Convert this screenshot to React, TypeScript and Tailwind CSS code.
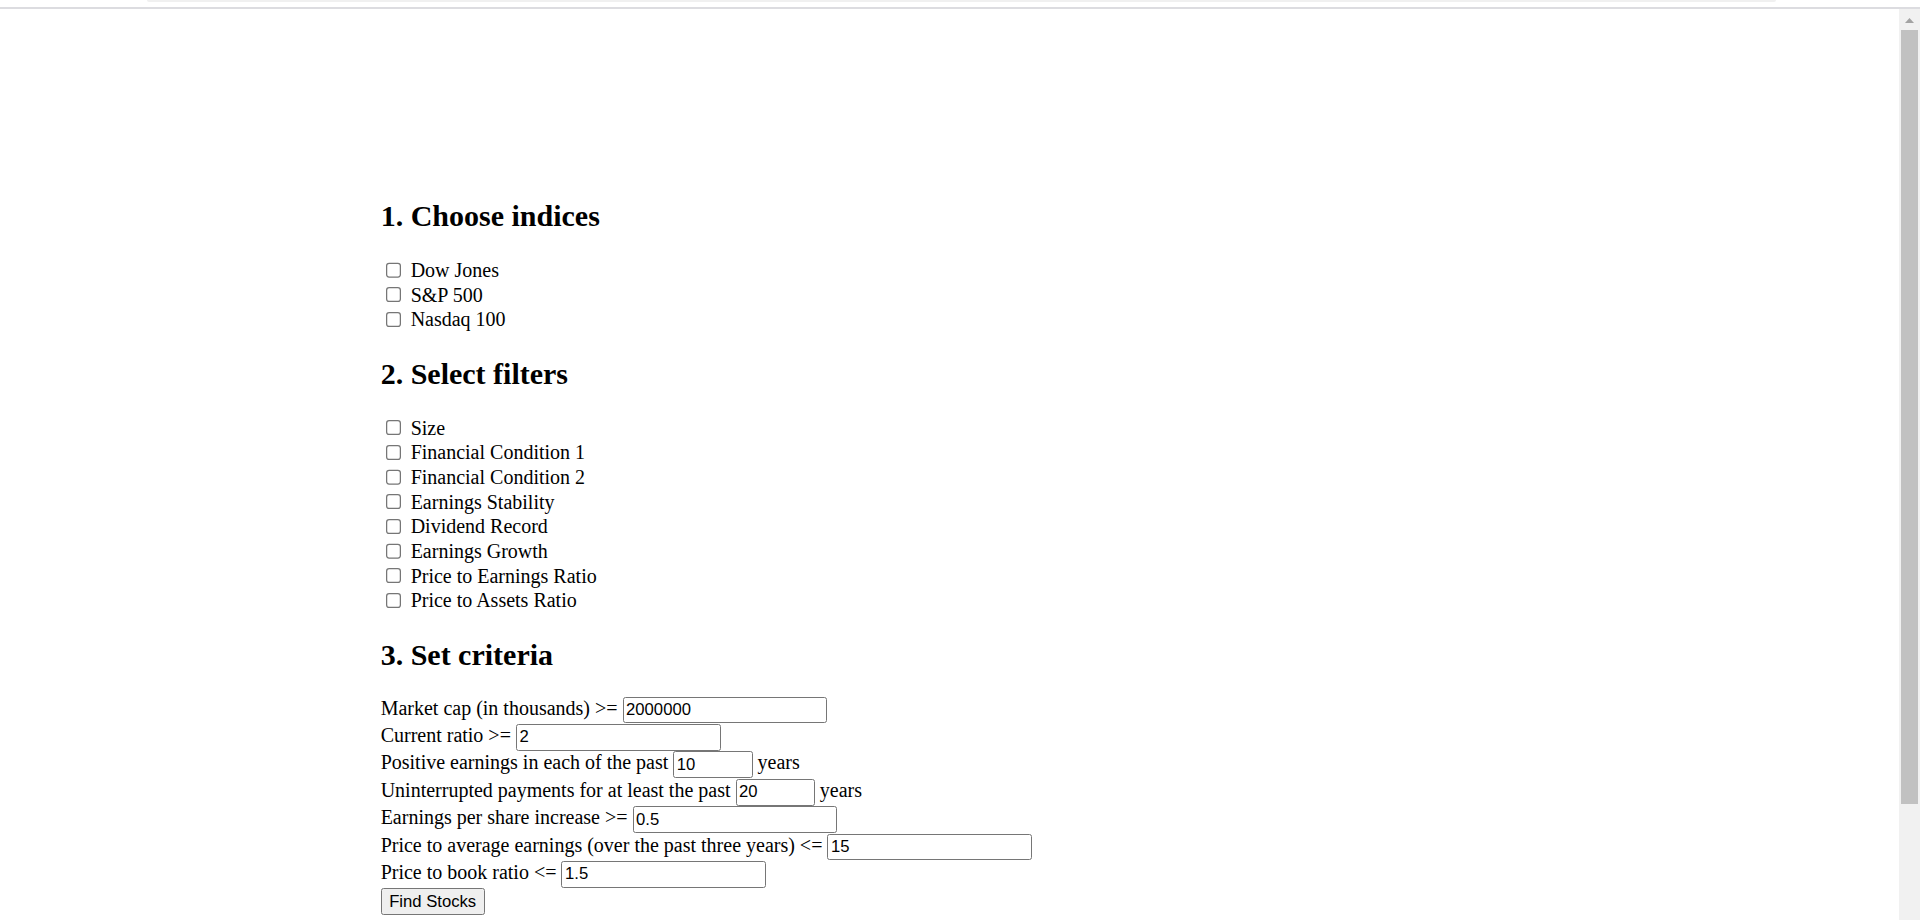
import React from "react";

const indices = ["Dow Jones", "S&P 500", "Nasdaq 100"];
const filters = [
  "Size",
  "Financial Condition 1",
  "Financial Condition 2",
  "Earnings Stability",
  "Dividend Record",
  "Earnings Growth",
  "Price to Earnings Ratio",
  "Price to Assets Ratio",
];

function CheckRow({ label }: { label: string }) {
  return (
    <div className="flex items-center h-[19.7px]">
      <input type="checkbox" className="ml-[4px] mr-[3px] w-[13px] h-[13px] shrink-0" />
      <label className="ml-[4px] leading-[normal] whitespace-nowrap">{label}</label>
    </div>
  );
}

function TextInput({ value, small }: { value: string; small?: boolean }) {
  return (
    <input
      type="text"
      defaultValue={value}
      className={
        (small ? "w-[63.4px] " : "w-[163.8px] ") +
        "h-[21.33px] border border-[#767676] rounded-[2px] px-[2px] py-[2px] bg-white text-black font-['Liberation_Sans',Arial,sans-serif] text-[13.333px] leading-[normal] align-baseline"
      }
    />
  );
}

function Row({ children }: { children: React.ReactNode }) {
  return <div className="h-[21.9px] leading-[normal] whitespace-nowrap">{children}</div>;
}

export default function App() {
  return (
    <div className="w-[1920px] h-[920px] overflow-hidden bg-white flex flex-col">
      <div className="h-[7px] shrink-0 flex">
        <div className="ml-[147px] w-[1629px] h-[2px] bg-[#f0f0f0] rounded-b-[2px]" />
      </div>
      <div className="h-[2px] shrink-0 bg-[#dcdce0]" />
      <div className="flex flex-1 min-h-0">
        <div className="flex-1 min-w-0 overflow-hidden">
          <div className="[zoom:1.25] pl-[304.5px] pt-[132.4px] font-['Liberation_Serif','Times_New_Roman',serif] text-[16px] text-black leading-[normal]">
            <h2 className="text-[24px] font-bold leading-[normal] my-[19.92px]">1. Choose indices</h2>
            {indices.map((l) => (
              <CheckRow key={l} label={l} />
            ))}
            <h2 className="text-[24px] font-bold leading-[normal] my-[19.92px]">2. Select filters</h2>
            {filters.map((l) => (
              <CheckRow key={l} label={l} />
            ))}
            <h2 className="text-[24px] font-bold leading-[normal] my-[19.92px]">3. Set criteria</h2>
            <Row>
              Market cap (in thousands) &gt;= <TextInput value="2000000" />
            </Row>
            <Row>
              Current ratio &gt;= <TextInput value="2" />
            </Row>
            <Row>
              Positive earnings in each of the past <TextInput value="10" small /> years
            </Row>
            <Row>
              Uninterrupted payments for at least the past <TextInput value="20" small /> years
            </Row>
            <Row>
              Earnings per share increase &gt;= <TextInput value="0.5" />
            </Row>
            <Row>
              Price to average earnings (over the past three years) &lt;= <TextInput value="15" />
            </Row>
            <Row>
              Price to book ratio &lt;= <TextInput value="1.5" />
            </Row>
            <div>
              <button
                type="button"
                className="h-[21.33px] px-[6px] py-[2px] border border-[#767676] rounded-[2px] bg-[#efefef] text-black font-['Liberation_Sans',Arial,sans-serif] text-[13.333px] leading-[normal]"
              >
                Find Stocks
              </button>
            </div>
          </div>
        </div>
        <div className="w-[21px] shrink-0 bg-[#f1f1f1] flex flex-col items-center">
          <svg width="9" height="5" viewBox="0 0 9 5" className="mt-[9px] shrink-0">
            <polygon points="4.5,0 9,5 0,5" fill="#a3a3a3" />
          </svg>
          <div className="mt-[7px] w-[17px] h-[774px] bg-[#c1c1c1] shrink-0" />
        </div>
      </div>
    </div>
  );
}
